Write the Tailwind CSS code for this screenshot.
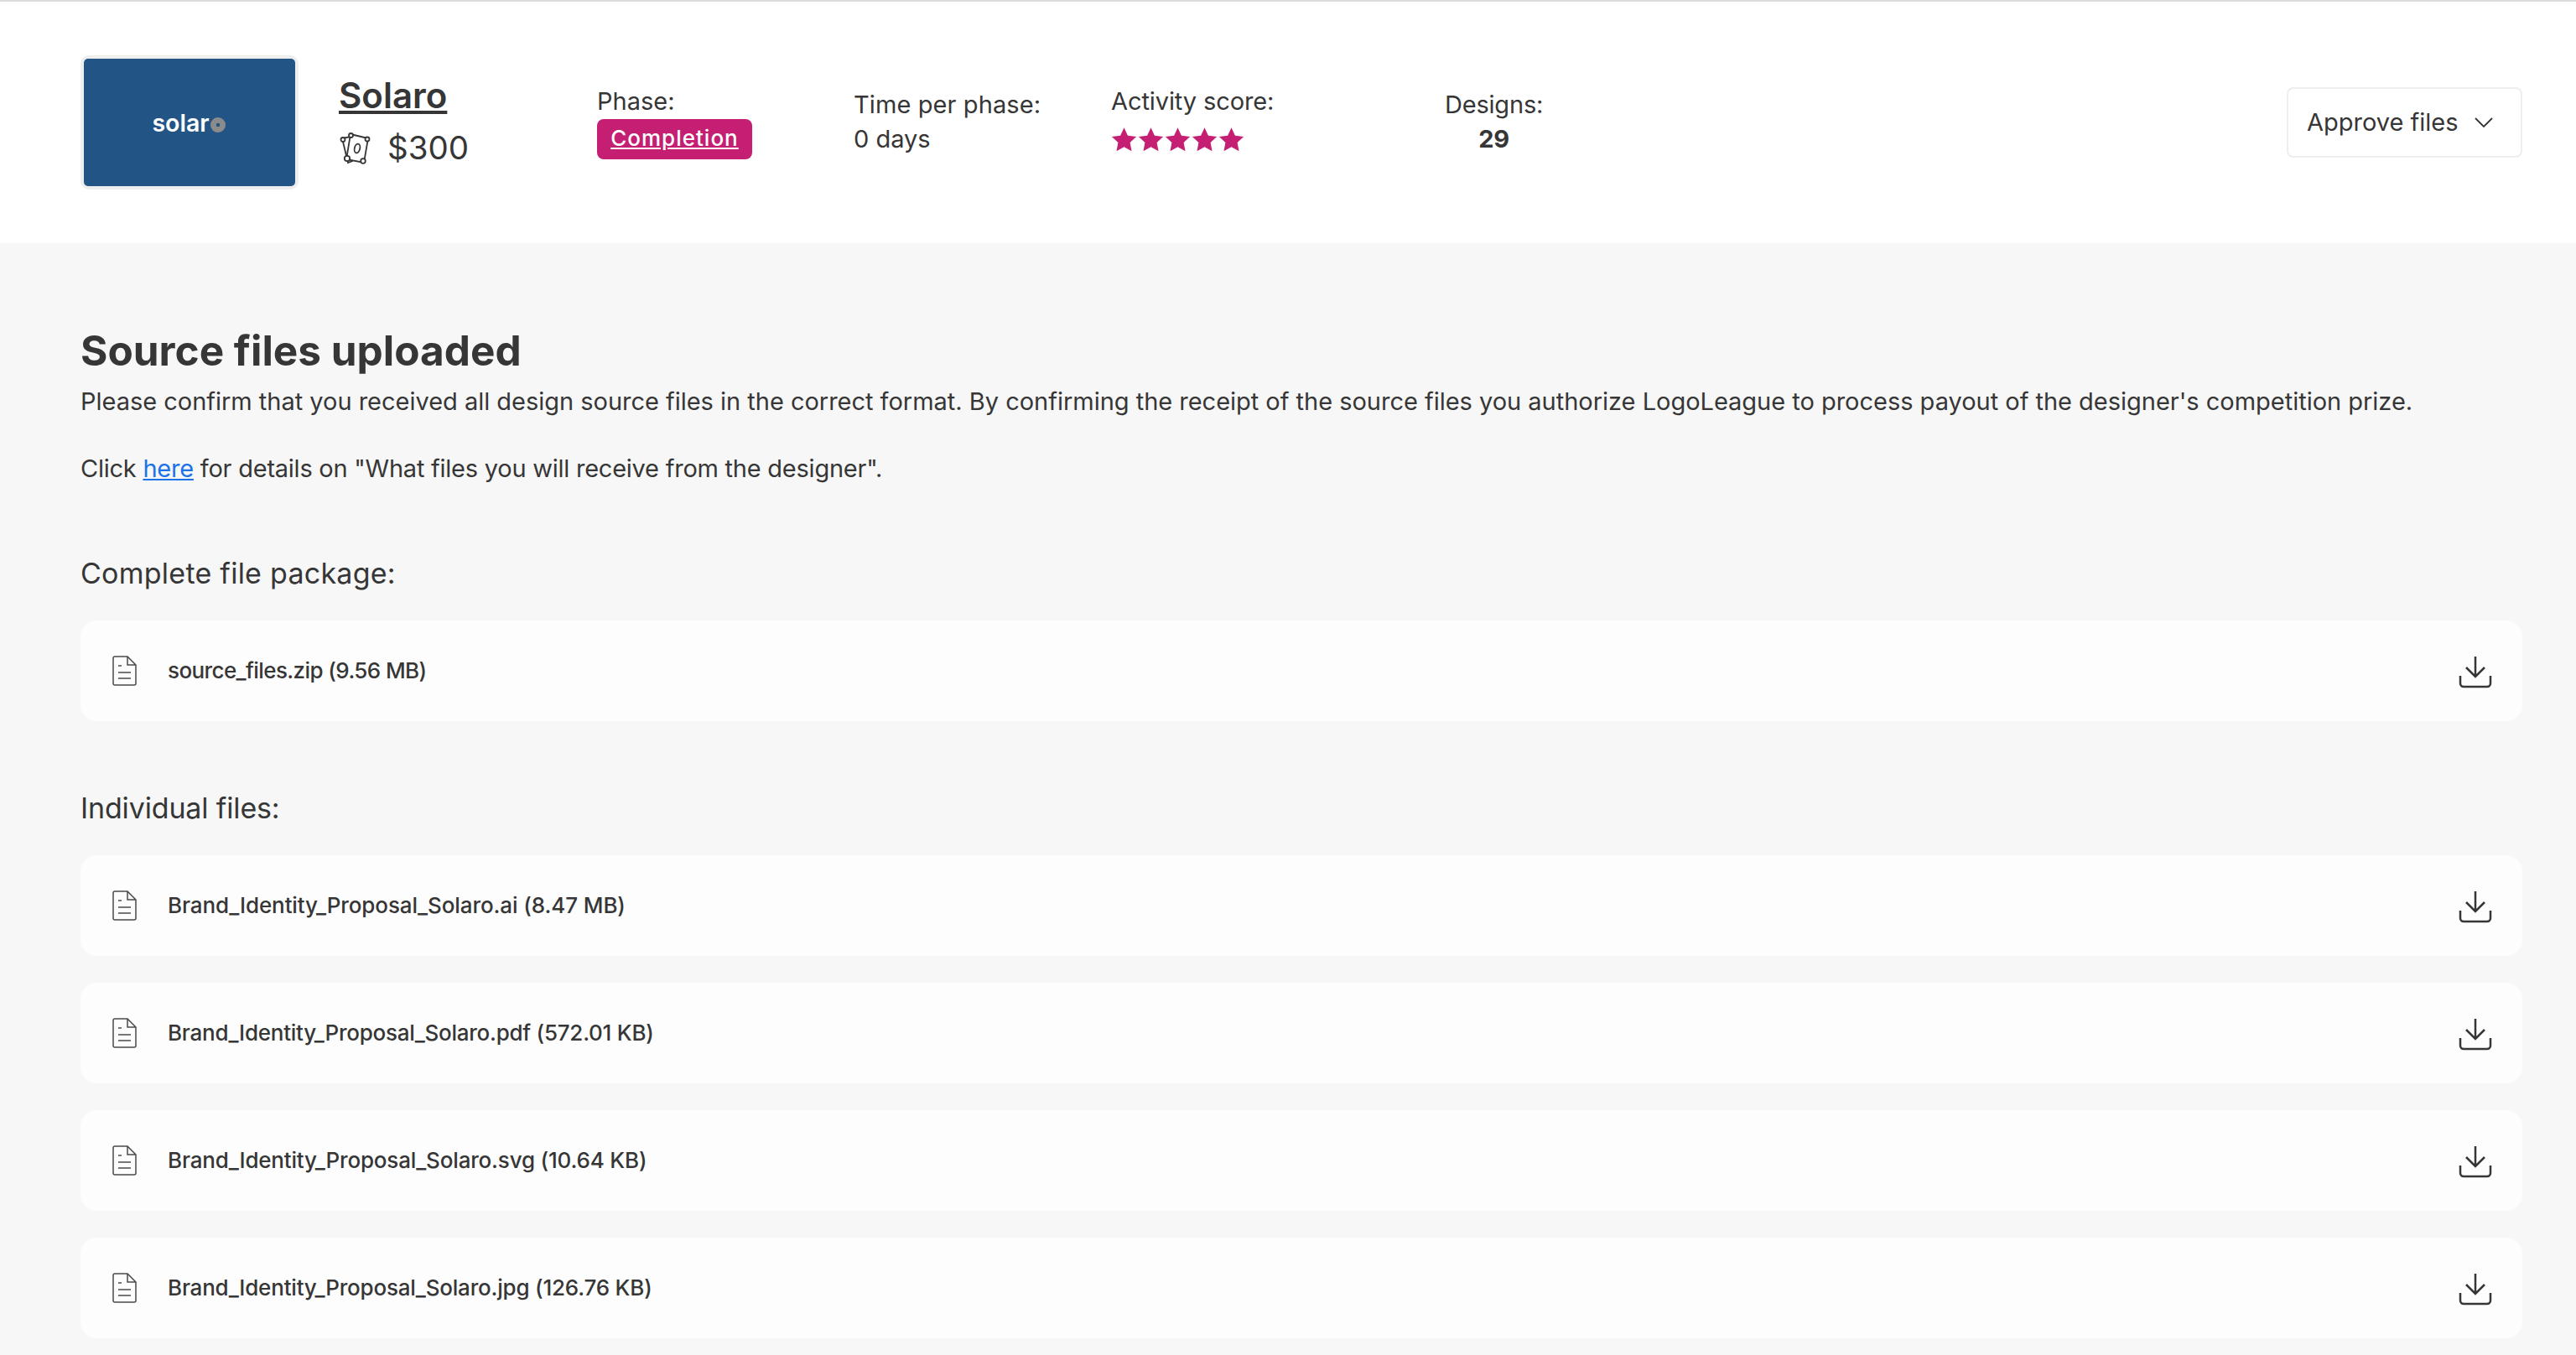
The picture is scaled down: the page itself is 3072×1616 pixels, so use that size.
<!DOCTYPE html>
<html lang="en">
<head>
    <meta charset="UTF-8">
    <title>Source files uploaded</title>
    <script src="https://cdn.jsdelivr.net/npm/@tailwindcss/browser@4"></script>
</head>
<body class="bg-[#f7f7f7] text-[#363636] font-['Inter',sans-serif] h-[1616px] overflow-hidden">

    <!-- Header -->
    <header class="h-[290px] bg-white border-t-2 border-[#dcdcdc] flex items-start pl-[96px] pr-[64px]">
        <div class="mt-[64px] w-[260px] h-[160px] border-4 border-[#eeeeee] rounded-[10px] shrink-0">
            <div class="w-full h-full bg-[#225586] rounded-[5px] flex items-center justify-center gap-[1px] pt-[2px]">
                <span class="text-white text-[28.5px] font-semibold leading-none -ml-[2px]">solar</span>
                <svg class="w-[18px] h-[18px] mt-[3px]" viewBox="0 0 16 16">
                    <circle cx="8" cy="8" r="8" fill="#8b8b8b"/>
                    <circle cx="8" cy="8" r="2" fill="#225586"/>
                </svg>
            </div>
        </div>

        <div class="w-[308px] ml-[48px] shrink-0">
            <a class="block mt-[88px] text-[42px] leading-[48px] font-semibold underline">Solaro</a>
            <div class="flex items-center mt-[15px] gap-[20px]">
                <svg class="w-[38px] h-[40px]" viewBox="0 0 38 40" fill="none" stroke="#363636" stroke-width="1.800">
                    <path d="M4 8 L19 5 L16 35 L11 37 Z"/>
                    <path d="M14 3 L35 8 L30 37 L9 33 Z" fill="#fff"/>
                    <circle cx="14.500" cy="4.500" r="2.500" fill="#fff"/>
                    <circle cx="34" cy="9" r="2.500" fill="#fff"/>
                    <circle cx="10" cy="32" r="3.200" fill="#fff"/>
                    <circle cx="29" cy="35" r="2.800" fill="#fff"/>
                    <circle cx="5" cy="9.500" r="2.500" fill="#fff"/>
                    <ellipse cx="22" cy="20" rx="3.200" ry="5.500" transform="rotate(14 22 20)"/>
                </svg>
                <span class="text-[38.500px] leading-[48px] -mt-[1px]">$300</span>
            </div>
        </div>

        <div class="w-[306px] shrink-0 pt-[100px] text-[29px] leading-[38px]">
            <div>Phase:</div>
            <a class="inline-block mt-[2px] h-[48px] w-[185px] bg-[#c41f73] text-white rounded-[8px] text-[26px] leading-[46px] font-medium underline text-center tracking-[1px]">Completion</a>
        </div>

        <div class="w-[307px] shrink-0 pt-[102px] text-[29px] leading-[41px]">
            <div class="tracking-[0.1px]">Time per phase:</div>
            <div>0 days</div>
        </div>

        <div class="w-[398px] shrink-0 pt-[98px] text-[29px] leading-[41px]">
            <div class="tracking-[-0.1px]">Activity score:</div>
            <div class="flex mt-[10px] gap-[1px]">
                <svg class="w-[31px] h-[31px] fill-[#c41f73]" viewBox="0 0 24 24"><path d="M12 1l3.400 7.300 7.900 1-5.800 5.500 1.500 7.900L12 18.800l-7 3.900 1.500-7.900L.700 9.300l7.900-1z"/></svg>
                <svg class="w-[31px] h-[31px] fill-[#c41f73]" viewBox="0 0 24 24"><path d="M12 1l3.400 7.300 7.900 1-5.800 5.500 1.500 7.900L12 18.800l-7 3.900 1.500-7.900L.700 9.300l7.900-1z"/></svg>
                <svg class="w-[31px] h-[31px] fill-[#c41f73]" viewBox="0 0 24 24"><path d="M12 1l3.400 7.300 7.900 1-5.800 5.500 1.500 7.900L12 18.800l-7 3.900 1.500-7.900L.700 9.300l7.900-1z"/></svg>
                <svg class="w-[31px] h-[31px] fill-[#c41f73]" viewBox="0 0 24 24"><path d="M12 1l3.400 7.300 7.900 1-5.800 5.500 1.500 7.900L12 18.800l-7 3.900 1.500-7.900L.700 9.300l7.900-1z"/></svg>
                <svg class="w-[31px] h-[31px] fill-[#c41f73]" viewBox="0 0 24 24"><path d="M12 1l3.400 7.300 7.900 1-5.800 5.500 1.500 7.900L12 18.800l-7 3.900 1.500-7.900L.700 9.300l7.900-1z"/></svg>
            </div>
        </div>

        <div class="shrink-0 pt-[102px] text-[29px] leading-[41px] text-center tracking-[-0.2px]">
            <div>Designs:</div>
            <div class="font-bold">29</div>
        </div>

        <button class="ml-auto mt-[102px] w-[281px] h-[84px] border-2 border-[#eeeeee] rounded-[8px] flex items-center pl-[22px] gap-[18px] text-[29px]">
            Approve files
            <svg class="w-[24px] h-[14px]" viewBox="0 0 24 14" fill="none" stroke="#363636" stroke-width="1.800"><path d="M2 2l10 10L22 2"/></svg>
        </button>
    </header>

    <!-- Content -->
    <main class="pl-[96px] pr-[64px] pt-[100px]">
        <h1 class="text-[49.500px] leading-[56px] font-bold">Source files uploaded</h1>
        <p class="mt-[13px] text-[29px] leading-[40px] tracking-[-0.02px]">Please confirm that you received all design source files in the correct format. By confirming the receipt of the source files you authorize LogoLeague to process payout of the designer's competition prize.</p>
        <p class="mt-[40px] text-[29px] leading-[40px] tracking-[-0.24px]">Click <a class="text-[#1a73e8] underline">here</a> for details on "What files you will receive from the designer".</p>

        <h2 class="mt-[83px] text-[34px] leading-[44px] tracking-[0.25px]">Complete file package:</h2>
        <div class="mt-[34px] h-[120px] bg-[#fdfdfd] rounded-[20px] flex items-center pl-[38px] pr-[36px]">
            <svg class="w-[29px] h-[36px] mr-[37px]" viewBox="0 0 29 36" fill="none" stroke="#4a4a4a" stroke-width="1.500"><path d="M3 1h15l10 10v22a2 2 0 0 1-2 2H3a2 2 0 0 1-2-2V3a2 2 0 0 1 2-2zM18 1v10h10M7 12h4M7 20h15M7 27h15"/></svg>
            <span class="text-[26px] font-medium tracking-[-0.6px] -mt-[1px]">source_files.zip (9.56 MB)</span>
            <svg class="ml-auto mt-[2px] w-[40px] h-[40px]" viewBox="0 0 40 40" fill="none" stroke="#363636" stroke-width="2.500"><path d="M20 2v24M9 15l11 11 11-11M2 25v9a4 4 0 0 0 4 4h28a4 4 0 0 0 4-4v-9"/></svg>
        </div>

        <h2 class="mt-[82px] text-[34px] leading-[44px] tracking-[-0.15px]">Individual files:</h2>
        <div class="mt-[34px] flex flex-col gap-[32px]">
            <div class="h-[120px] bg-[#fdfdfd] rounded-[20px] flex items-center pl-[38px] pr-[36px]">
                <svg class="w-[29px] h-[36px] mr-[37px]" viewBox="0 0 29 36" fill="none" stroke="#4a4a4a" stroke-width="1.500"><path d="M3 1h15l10 10v22a2 2 0 0 1-2 2H3a2 2 0 0 1-2-2V3a2 2 0 0 1 2-2zM18 1v10h10M7 12h4M7 20h15M7 27h15"/></svg>
                <span class="text-[26px] font-medium tracking-[-0.1px] -mt-[1px]">Brand_Identity_Proposal_Solaro.ai (8.47 MB)</span>
                <svg class="ml-auto mt-[2px] w-[40px] h-[40px]" viewBox="0 0 40 40" fill="none" stroke="#363636" stroke-width="2.500"><path d="M20 2v24M9 15l11 11 11-11M2 25v9a4 4 0 0 0 4 4h28a4 4 0 0 0 4-4v-9"/></svg>
            </div>
            <div class="h-[120px] bg-[#fdfdfd] rounded-[20px] flex items-center pl-[38px] pr-[36px]">
                <svg class="w-[29px] h-[36px] mr-[37px]" viewBox="0 0 29 36" fill="none" stroke="#4a4a4a" stroke-width="1.500"><path d="M3 1h15l10 10v22a2 2 0 0 1-2 2H3a2 2 0 0 1-2-2V3a2 2 0 0 1 2-2zM18 1v10h10M7 12h4M7 20h15M7 27h15"/></svg>
                <span class="text-[26px] font-medium tracking-[-0.25px] -mt-[1px]">Brand_Identity_Proposal_Solaro.pdf (572.01 KB)</span>
                <svg class="ml-auto mt-[2px] w-[40px] h-[40px]" viewBox="0 0 40 40" fill="none" stroke="#363636" stroke-width="2.500"><path d="M20 2v24M9 15l11 11 11-11M2 25v9a4 4 0 0 0 4 4h28a4 4 0 0 0 4-4v-9"/></svg>
            </div>
            <div class="h-[120px] bg-[#fdfdfd] rounded-[20px] flex items-center pl-[38px] pr-[36px]">
                <svg class="w-[29px] h-[36px] mr-[37px]" viewBox="0 0 29 36" fill="none" stroke="#4a4a4a" stroke-width="1.500"><path d="M3 1h15l10 10v22a2 2 0 0 1-2 2H3a2 2 0 0 1-2-2V3a2 2 0 0 1 2-2zM18 1v10h10M7 12h4M7 20h15M7 27h15"/></svg>
                <span class="text-[26px] font-medium tracking-[-0.18px] -mt-[1px]">Brand_Identity_Proposal_Solaro.svg (10.64 KB)</span>
                <svg class="ml-auto mt-[2px] w-[40px] h-[40px]" viewBox="0 0 40 40" fill="none" stroke="#363636" stroke-width="2.500"><path d="M20 2v24M9 15l11 11 11-11M2 25v9a4 4 0 0 0 4 4h28a4 4 0 0 0 4-4v-9"/></svg>
            </div>
            <div class="h-[120px] bg-[#fdfdfd] rounded-[20px] flex items-center pl-[38px] pr-[36px]">
                <svg class="w-[29px] h-[36px] mr-[37px]" viewBox="0 0 29 36" fill="none" stroke="#4a4a4a" stroke-width="1.500"><path d="M3 1h15l10 10v22a2 2 0 0 1-2 2H3a2 2 0 0 1-2-2V3a2 2 0 0 1 2-2zM18 1v10h10M7 12h4M7 20h15M7 27h15"/></svg>
                <span class="text-[26px] font-medium tracking-[-0.2px] -mt-[1px]">Brand_Identity_Proposal_Solaro.jpg (126.76 KB)</span>
                <svg class="ml-auto mt-[2px] w-[40px] h-[40px]" viewBox="0 0 40 40" fill="none" stroke="#363636" stroke-width="2.500"><path d="M20 2v24M9 15l11 11 11-11M2 25v9a4 4 0 0 0 4 4h28a4 4 0 0 0 4-4v-9"/></svg>
            </div>
        </div>
    </main>
</body>
</html>
